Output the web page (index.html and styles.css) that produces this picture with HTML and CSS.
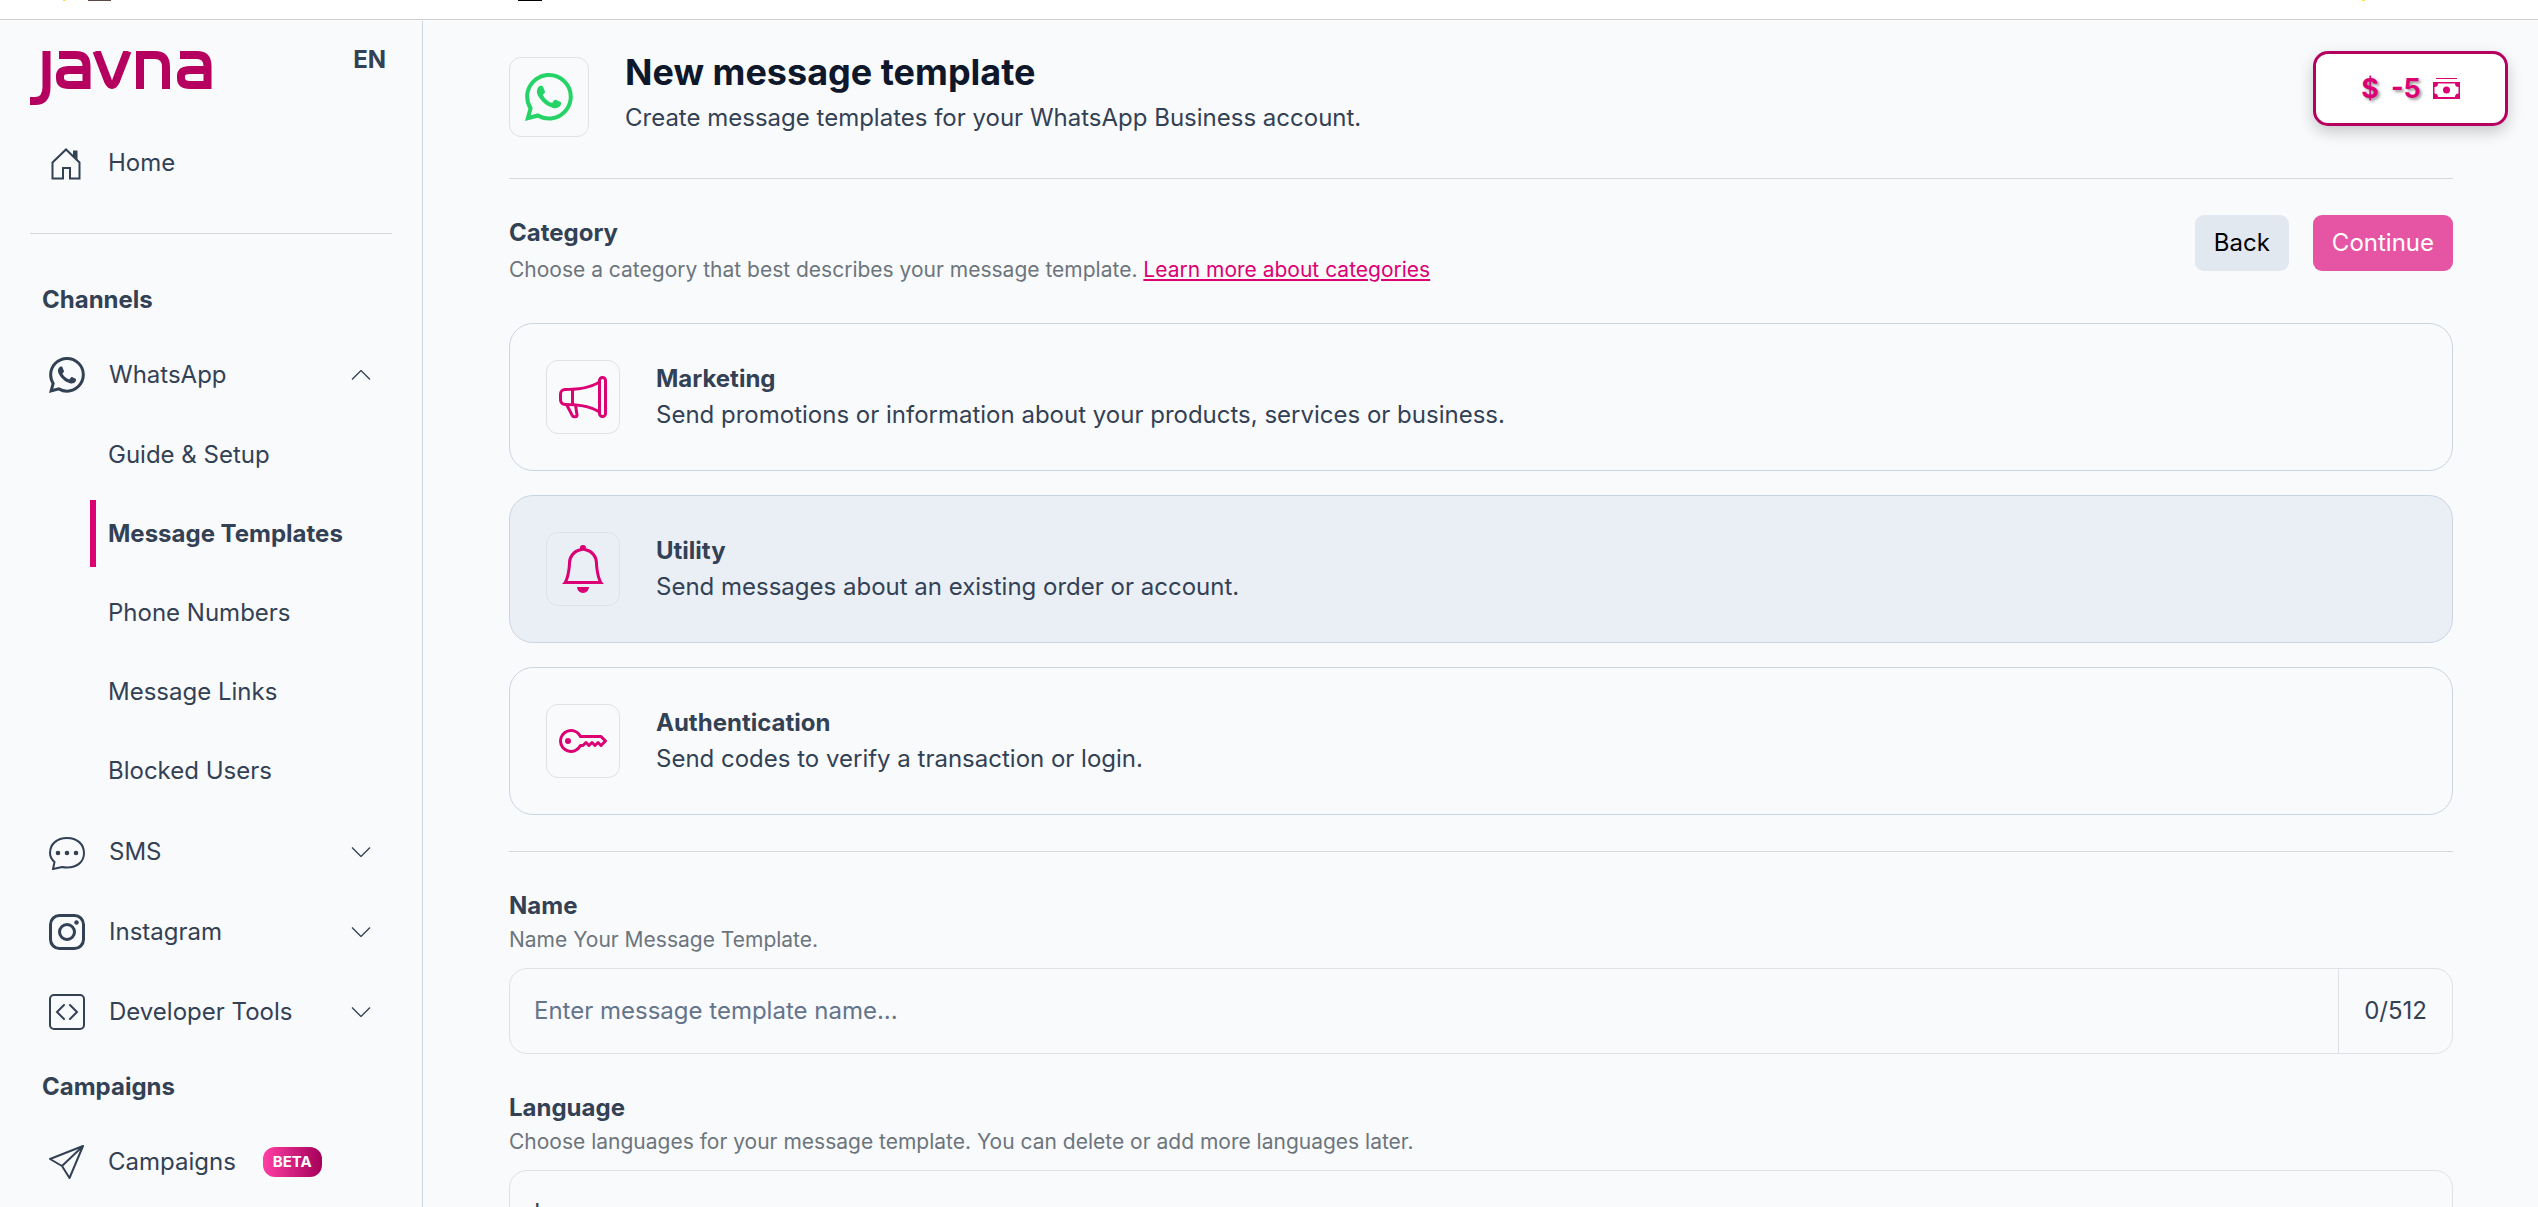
FILE: index.html
```html
<!DOCTYPE html>
<html lang="en">
<head>
<meta charset="utf-8">
<title>New message template</title>
<link rel="stylesheet" href="styles.css">
</head>
<body>
<svg class="sprite" aria-hidden="true">
  <symbol id="whatsapp" viewBox="0 0 16 16"><path d="M13.601 2.326A7.85 7.85 0 0 0 7.994 0C3.627 0 .068 3.558.064 7.926c0 1.399.366 2.76 1.057 3.965L0 16l4.204-1.102a7.9 7.9 0 0 0 3.79.965h.004c4.368 0 7.926-3.558 7.93-7.93A7.9 7.9 0 0 0 13.6 2.326zM7.994 14.521a6.6 6.6 0 0 1-3.356-.92l-.24-.144-2.494.654.666-2.433-.156-.251a6.56 6.56 0 0 1-1.007-3.505c0-3.626 2.957-6.584 6.591-6.584a6.56 6.56 0 0 1 4.66 1.931 6.56 6.56 0 0 1 1.928 4.66c-.004 3.639-2.961 6.592-6.592 6.592m3.615-4.934c-.197-.099-1.17-.578-1.353-.646-.182-.065-.315-.099-.445.099-.133.197-.513.646-.627.775-.114.133-.232.148-.43.05-.197-.1-.836-.308-1.592-.985-.59-.525-.985-1.175-1.103-1.372-.114-.198-.011-.304.088-.403.087-.088.197-.232.296-.346.1-.114.133-.198.198-.33.065-.134.034-.248-.015-.347-.05-.099-.445-1.076-.612-1.47-.16-.389-.323-.335-.445-.34-.114-.007-.247-.007-.38-.007a.73.73 0 0 0-.529.247c-.182.198-.691.677-.691 1.654s.71 1.916.81 2.049c.098.133 1.394 2.132 3.383 2.992.47.205.84.326 1.129.418.475.152.904.129 1.246.08.38-.058 1.171-.48 1.338-.943.164-.464.164-.86.114-.943-.049-.084-.182-.133-.38-.232"/></symbol>
  <symbol id="chevron" viewBox="0 0 20 10"><path d="M1 .5l9 9 9-9" fill="none" stroke="currentColor" stroke-width="1.3"/></symbol>
</svg>
<div class="topstrip"></div>
<div class="shell">
  <aside class="sidebar">
    <div class="brand">
      <a href="#" aria-label="javna">
        <svg class="logo" viewBox="0 0 182 54" fill="none" stroke="currentColor" stroke-width="8">
          <path d="M16.500 0V36Q16.500 50 5 50H0"/>
          <path d="M29 4H46Q56.500 4 56.500 15V34H39Q30 34 30 27V25Q30 19 39 19H55"/>
          <path d="M66.500 0L78 30Q82 38 86 30L97.500 0"/>
          <path d="M110 38V4H125Q136 4 136 16V38"/>
          <path d="M150 4H167Q177.500 4 177.500 15V34H160Q151 34 151 27V25Q151 19 160 19H175"/>
        </svg>
      </a>
      <button class="lang" type="button">EN</button>
    </div>
    <nav class="nav">
      <a class="item home" href="#">
        <svg class="icon" viewBox="0 0 36 36" fill="none" stroke="currentColor" stroke-width="2"><path d="M3.500 33.500V17.500L17 4.500l13.500 13v16h-9.500V23h-7v10.500z"/><path d="M25 6.500h2.500v7L25 11z" fill="currentColor"/></svg>
        <span>Home</span>
      </a>
      <hr class="rule">
      <h2 class="group">Channels</h2>
      <button class="item" type="button"><svg class="icon" fill="currentColor"><use href="#whatsapp"/></svg><span>WhatsApp</span><svg class="chevron up"><use href="#chevron"/></svg></button>
      <ul class="sub">
        <li><a href="#">Guide &amp; Setup</a></li>
        <li><a class="active" href="#">Message Templates</a></li>
        <li><a href="#">Phone Numbers</a></li>
        <li><a href="#">Message Links</a></li>
        <li><a href="#">Blocked Users</a></li>
      </ul>
      <button class="item" type="button">
        <svg class="icon" viewBox="0 0 36 36" fill="none" stroke="currentColor" stroke-width="2"><path d="M4 35l1.500-7Q1 24 1 19C1 10 8 4 18 4s17 6 17 15-7 14.500-17 14.500q-3 0-5-.5-4 1-9 2z"/><g fill="currentColor" stroke="none"><circle cx="9" cy="19" r="2.300"/><circle cx="18" cy="19" r="2.300"/><circle cx="27" cy="19" r="2.300"/></g></svg>
        <span>SMS</span><svg class="chevron"><use href="#chevron"/></svg></button>
      <button class="item" type="button">
        <svg class="icon" viewBox="0 0 36 36" fill="none" stroke="currentColor" stroke-width="3"><rect x="1.500" y="1.500" width="33" height="33" rx="9"/><circle cx="18" cy="18" r="7.500"/><circle cx="27.500" cy="8.500" r="2.200" fill="currentColor" stroke="none"/></svg>
        <span>Instagram</span><svg class="chevron"><use href="#chevron"/></svg></button>
      <button class="item" type="button">
        <svg class="icon" viewBox="0 0 36 36" fill="none" stroke="currentColor" stroke-width="2"><rect x="1" y="1" width="34" height="34" rx="4"/><path d="M15 11l-7 7 7 7M21 11l7 7-7 7" stroke-linecap="round"/></svg>
        <span>Developer Tools</span><svg class="chevron"><use href="#chevron"/></svg></button>
      <h2 class="group campaigns">Campaigns</h2>
      <a class="item" href="#">
        <svg class="icon" viewBox="0 0 36 36" fill="none" stroke="currentColor" stroke-width="2" stroke-linejoin="round"><path d="M34 2L1 15l12 7 7.500 12zM34 2L13 22"/></svg>
        <span>Campaigns</span><span class="beta">BETA</span>
      </a>
    </nav>
  </aside>

  <main class="main">
    <header class="pagehead">
      <div class="tile large"><svg class="wa" fill="currentColor"><use href="#whatsapp"/></svg></div>
      <div>
        <h1>New message template</h1>
        <p>Create message templates for your WhatsApp Business account.</p>
      </div>
    </header>
    <button class="balance" type="button"><span>$</span><span>-5</span>
      <svg class="cash" viewBox="0 0 27 21"><path d="M3 0h21v1H3zM0 4h27v17H0z" fill="currentColor"/><path d="M5 5.500h17a3.500 3.500 0 0 0 3.500 3.500v6.500a3.500 3.500 0 0 0-3.500 3.500H5a3.500 3.500 0 0 0-3.500-3.500V9A3.500 3.500 0 0 0 5 5.500z" fill="#fff"/><circle cx="13.500" cy="12" r="3.500" fill="currentColor"/></svg>
    </button>

    <section class="category">
      <div class="sectionhead">
        <div>
          <h2>Category</h2>
          <p class="hint">Choose a category that best describes your message template. <a href="#">Learn more about categories</a></p>
        </div>
        <div class="actions">
          <button class="btn back" type="button">Back</button>
          <button class="btn continue" type="button">Continue</button>
        </div>
      </div>
      <div class="cards">
        <button class="card" type="button">
          <span class="tile"><svg class="glyph" viewBox="0 0 16 16" fill="currentColor"><path d="M13 2.500a1.500 1.500 0 0 1 3 0v11a1.500 1.500 0 0 1-3 0v-.214c-2.162-1.241-4.490-1.843-6.912-2.083l.405 2.712A1 1 0 0 1 5.510 15.100h-.548a1 1 0 0 1-.916-.599l-1.850-3.490-.202-.003A2.014 2.014 0 0 1 0 9V7a2.020 2.020 0 0 1 1.992-2.013 75 75 0 0 0 2.483-.075c3.043-.154 6.148-.849 8.525-2.199zm1 0v11a.5.5 0 0 0 1 0v-11a.5.5 0 0 0-1 0m-1 1.350c-2.344 1.205-5.209 1.842-8 2.033v4.233q.27.015.537.036c2.568.189 5.093.744 7.463 1.993zm-9 6.215v-4.130a95 95 0 0 1-1.992.052A1.020 1.020 0 0 0 1 7v2c0 .55.448 1.002 1.006 1.009A61 61 0 0 1 4 10.065m-.657.975 1.609 3.037.010.024h.548l-.002-.014-.443-2.966a68 68 0 0 0-1.722-.082z"/></svg></span>
          <span class="copy"><strong>Marketing</strong><span>Send promotions or information about your products, services or business.</span></span>
        </button>
        <button class="card selected" type="button">
          <span class="tile"><svg class="glyph" viewBox="0 0 16 16" fill="currentColor"><path d="M8 16a2 2 0 0 0 2-2H6a2 2 0 0 0 2 2M8 1.918l-.797.161A4 4 0 0 0 4 6c0 .628-.134 2.197-.459 3.742-.160.767-.376 1.566-.663 2.258h10.244c-.287-.692-.502-1.490-.663-2.258C12.134 8.197 12 6.628 12 6a4 4 0 0 0-3.203-3.920zM14.220 12c.223.447.481.801.780 1H1c.299-.199.557-.553.780-1C2.680 10.200 3 6.880 3 6c0-2.420 1.720-4.440 4.005-4.901a1 1 0 1 1 1.990 0A5 5 0 0 1 13 6c0 .880.320 4.200 1.220 6"/></svg></span>
          <span class="copy"><strong>Utility</strong><span>Send messages about an existing order or account.</span></span>
        </button>
        <button class="card" type="button">
          <span class="tile"><svg class="glyph" viewBox="0 0 16 16" fill="currentColor"><path d="M0 8a4 4 0 0 1 7.465-2H14a.5.5 0 0 1 .354.146l1.500 1.500a.5.5 0 0 1 0 .708l-1.500 1.500a.5.5 0 0 1-.708 0L13 9.207l-.646.647a.5.5 0 0 1-.708 0L11 9.207l-.646.647a.5.5 0 0 1-.708 0L9 9.207l-.646.647A.5.5 0 0 1 8 10h-.535A4 4 0 0 1 0 8m4-3a3 3 0 1 0 2.712 4.285A.5.5 0 0 1 7.163 9h.630l.853-.854a.5.5 0 0 1 .708 0l.646.647.646-.647a.5.5 0 0 1 .708 0l.646.647.646-.647a.5.5 0 0 1 .708 0l.646.647.793-.793-1-1h-6.630a.5.5 0 0 1-.451-.285A3 3 0 0 0 4 5"/><path d="M4 8a1 1 0 1 1-2 0 1 1 0 0 1 2 0"/></svg></span>
          <span class="copy"><strong>Authentication</strong><span>Send codes to verify a transaction or login.</span></span>
        </button>
      </div>
    </section>

    <form class="form">
      <div class="field">
        <label for="name">Name</label>
        <p class="hint">Name Your Message Template.</p>
        <div class="box"><input id="name" type="text" placeholder="Enter message template name..."><output class="count" for="name">0/512</output></div>
      </div>
      <div class="field">
        <label for="language">Language</label>
        <p class="hint">Choose languages for your message template. You can delete or add more languages later.</p>
        <div class="box"><input id="language" type="text" value="Language"></div>
      </div>
    </form>
  </main>
</div>
</body>
</html>
```
FILE: styles.css
```css
* { box-sizing: border-box; }
html, body { height: 100%; }
body {
  margin: 0;
  display: flex;
  flex-direction: column;
  overflow: hidden;
  background: #f9fafc;
  color: #334155;
  font: 400 24px/36px Inter, "Liberation Sans", sans-serif;
}
h1, h2, p, ul { margin: 0; padding: 0; }
ul { list-style: none; }
button, input { font: inherit; color: inherit; }
button { cursor: pointer; }
a { color: inherit; text-decoration: none; }
.sprite { position: absolute; width: 0; height: 0; }

.topstrip {
  flex: none;
  height: 21px;
  background:
    linear-gradient(#ccc, #ccc) 0 19px / 100% 1px no-repeat,
    linear-gradient(#ffe14d, #ffe14d) 63px 0 / 3px 1px no-repeat,
    linear-gradient(#5a4a42, #5a4a42) 88px 0 / 23px 1px no-repeat,
    linear-gradient(#000, #000) 518px 0 / 24px 1px no-repeat,
    linear-gradient(#ffe14d, #ffe14d) right 173px top 0 / 3px 1px no-repeat,
    #fff;
}
.shell { flex: 1; min-height: 0; display: flex; }

.sidebar {
  flex: none;
  width: 423px;
  overflow: hidden;
  padding: 27px 30px 0;
  border-right: 1px solid #cbd5e1;
}
.brand { display: flex; justify-content: space-between; color: #b5005f; }
.logo { display: block; width: 182px; height: 54px; margin-top: 3px; }
.lang { height: 24px; padding: 0 6px; border: 0; background: none; color: #334155; font-weight: 700; line-height: 24px; }
.nav { display: flex; flex-direction: column; }
.item {
  display: flex;
  align-items: center;
  gap: 24px;
  height: 68px;
  margin-bottom: 12px;
  padding: 0 21px 0 19px;
  border: 0;
  background: none;
  text-align: left;
}
a.item { gap: 23px; }
.item.home { margin: 24px 0 0; }
.icon { flex: none; width: 36px; height: 36px; }
.chevron { width: 20px; height: 10px; margin-left: auto; }
.chevron.up { transform: rotate(180deg); }
.rule { width: 100%; height: 1px; margin: 36px 0 48px; border: 0; background: #d5d8dc; }
.group { padding-left: 12px; font-size: 24px; line-height: 36px; font-weight: 700; }
.group + .item { margin-top: 23px; }
.group.campaigns { margin-top: 11px; }
.sub { padding-bottom: 2px; }
.sub li { padding-left: 60px; margin-bottom: 12px; }
.sub a { display: block; height: 67px; padding-left: 12px; border-left: 6px solid transparent; line-height: 67px; }
.sub a.active { border-color: #db0074; font-weight: 700; }
.beta {
  height: 30px;
  margin-left: 4px;
  padding: 0 10px;
  border-radius: 12px;
  background: linear-gradient(90deg, #ff3fa4, #a3005a);
  color: #fff;
  font-size: 15px;
  line-height: 30px;
  font-weight: 700;
}

.main { position: relative; flex: 1; min-width: 0; overflow: hidden; padding: 29px 85px 0 86px; }
.pagehead { display: flex; gap: 36px; padding-bottom: 41px; border-bottom: 1px solid #d5d8dc; }
.pagehead h1 { color: #0f172a; font-size: 36px; line-height: 44px; font-weight: 700; }
.pagehead p { margin-top: 6px; line-height: 36px; }
.tile {
  flex: none;
  display: flex;
  align-items: center;
  justify-content: center;
  width: 74px;
  height: 74px;
  border: 1px solid #dee2e6;
  border-radius: 12px;
}
.tile.large { width: 80px; height: 80px; margin-top: 7px; color: #25d366; }
.wa, .glyph { width: 48px; height: 48px; }
.glyph { color: #db0074; }
.balance {
  position: absolute;
  top: 30px;
  right: 30px;
  display: flex;
  align-items: center;
  justify-content: center;
  gap: 12px;
  width: 195px;
  height: 75px;
  border: 3px solid #b5005f;
  border-radius: 15px;
  background: #fff;
  box-shadow: 0 6px 15px rgba(0, 0, 0, .2);
  color: #db0074;
  font-size: 27px;
  font-weight: 700;
  text-shadow: 2px 2px 3px rgba(0, 0, 0, .4);
}
.cash { width: 27px; height: 21px; }

.sectionhead { display: flex; justify-content: space-between; padding: 36px 0 37px; }
.sectionhead h2, .field label { display: block; font-size: 24px; line-height: 36px; font-weight: 700; }
.hint { color: #6c757d; font-size: 21px; line-height: 32px; }
.sectionhead .hint { margin-top: 3px; }
.hint a { color: #db0074; text-decoration: underline; }
.actions { display: flex; gap: 24px; }
.btn { height: 56px; padding: 0 19px; border: 0; border-radius: 9px; }
.back { background: #e2e8f0; color: #000; }
.continue { background: #e655a3; color: #fff; }
.cards { display: flex; flex-direction: column; gap: 24px; }
.card {
  display: flex;
  align-items: center;
  gap: 36px;
  width: 100%;
  height: 148px;
  padding: 0 36px;
  border: 1px solid #cbd5e1;
  border-radius: 24px;
  background: none;
  text-align: left;
}
.card.selected { background: #eaeff6; }
.copy { display: flex; flex-direction: column; }
.copy strong { font-weight: 700; }

.form { margin-top: 36px; padding-top: 36px; border-top: 1px solid #d5d8dc; }
.field { margin-bottom: 36px; }
.box { display: flex; height: 86px; margin-top: 12px; overflow: hidden; border: 1px solid #dee2e6; border-radius: 18px; }
.box input { flex: 1; min-width: 0; padding: 0 24px; border: 0; outline: 0; background: none; }
.box input::placeholder { color: #64748b; opacity: 1; }
.count { padding: 0 25px; border-left: 1px solid #dee2e6; line-height: 84px; }
```
